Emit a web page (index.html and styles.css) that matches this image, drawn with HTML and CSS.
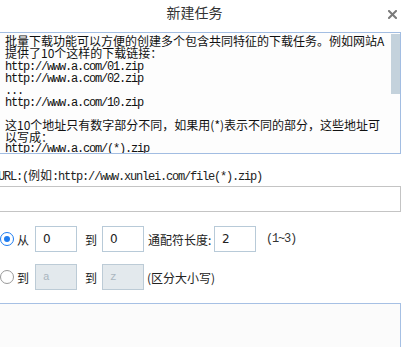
FILE: index.html
```html
<!DOCTYPE html>
<html lang="zh-CN">
<head>
    <meta charset="UTF-8">
    <title>新建任务</title>
    <link rel="stylesheet" href="styles.css">
</head>
<body>
    <div class="dialog">
        <!-- Заголовок окна -->
        <div class="header">
            <span class="title">新建任务</span>
            <span class="close">
                <svg width="9" height="9" viewBox="0 0 9 9">
                    <path d="M1 1 L8 8 M8 1 L1 8" stroke="#7a7a7a" stroke-width="2" stroke-linecap="square"/>
                </svg>
            </span>
        </div>

        <div class="body">
            <!-- Описание пакетной загрузки -->
            <div class="memo">
                <div class="memo-text">
                    <div class="line">批量下载功能可以方便的创建多个包含共同特征的下载任务。例如网站A</div>
                    <div class="line">提供了10个这样的下载链接：</div>
                    <div class="line mono first-url">http://www.a.com/01.zip</div>
                    <div class="line mono">http://www.a.com/02.zip</div>
                    <div class="line mono">...</div>
                    <div class="line mono">http://www.a.com/10.zip</div>
                    <div class="line blank"></div>
                    <div class="line">这10个地址只有数字部分不同，如果用(*)表示不同的部分，这些地址可</div>
                    <div class="line">以写成：</div>
                    <div class="line mono">http://www.a.com/(*).zip</div>
                </div>
                <div class="scrollbar"><div class="thumb"></div></div>
            </div>

            <div class="url-label"><span class="mono">URL:(</span>例如<span class="mono">:http://www.xunlei.com/file(*).zip)</span></div>
            <div class="url-input"></div>

            <!-- Диапазон чисел -->
            <div class="range-row">
                <span class="radio checked"></span>
                <span class="label first">从</span>
                <span class="field">0</span>
                <span class="label">到</span>
                <span class="field to">0</span>
                <span class="label wide">通配符长度:</span>
                <span class="field len">2</span>
                <span class="hint mono">(1~3)</span>
            </div>

            <!-- Диапазон букв -->
            <div class="range-row second">
                <span class="radio"></span>
                <span class="label first">到</span>
                <span class="field disabled mono">a</span>
                <span class="label">到</span>
                <span class="field disabled to mono">z</span>
                <span class="label case">(区分大小写)</span>
            </div>

            <div class="result"></div>
        </div>
    </div>
</body>
</html>
```

FILE: styles.css
```css
/* Основные стили */
body, html {
    margin: 0;
    padding: 0;
    background-color: #fff;
    font-family: 'Noto Sans CJK SC', sans-serif;
    color: #222;
    overflow: hidden;
}

.dialog {
    width: 412px;
    height: 347px;
    overflow: hidden;
}

.header {
    display: flex;
    align-items: flex-start;
    height: 32px;
    padding-left: 12px;
    box-sizing: border-box;
}

.title {
    flex: 1;
    text-align: center;
    font-size: 14px;
    line-height: 24px;
    color: #333;
}

.close {
    width: 35px;
    padding-top: 10px;
    padding-left: 11px;
    box-sizing: border-box;
}

.close svg {
    display: block;
}

.body {
    margin-left: -4px;
    width: 405px;
    display: flex;
    flex-direction: column;
}

.mono {
    font-family: 'Liberation Mono', monospace;
    font-size: 12px;
    letter-spacing: -1.2px;
}

/* Текстовое поле с описанием */
.memo {
    display: flex;
    height: 122px;
    box-sizing: border-box;
    border: 1px solid #a2bde2;
    background-color: #fdfdfd;
    overflow: hidden;
}

.memo-text {
    flex: 1;
    padding: 2px 0 0 8px;
    font-size: 12px;
    color: #111;
    white-space: nowrap;
    overflow: hidden;
}

.line {
    height: 12px;
    line-height: 12px;
}

.line.first-url {
    margin-top: 2px;
}

.line.blank {
    height: 10px;
}

.scrollbar {
    width: 9px;
}

.thumb {
    margin-top: 1px;
    height: 60px;
    background-color: #c4d2dc;
}

.url-label {
    margin-top: 14px;
    padding-left: 2px;
    height: 14px;
    line-height: 14px;
    font-size: 12px;
    color: #222;
    white-space: nowrap;
}

.url-input {
    margin-top: 4px;
    height: 26px;
    box-sizing: border-box;
    border: 1px solid #c4c4c4;
    background-color: #fff;
}

/* Строки с диапазонами */
.range-row {
    display: flex;
    align-items: center;
    margin-top: 14px;
    padding-left: 4px;
    height: 26px;
    font-size: 12px;
}

.range-row.second {
    margin-top: 12px;
}

.radio {
    width: 14px;
    height: 14px;
    box-sizing: border-box;
    border: 1px solid #9a9a9a;
    border-radius: 50%;
    display: flex;
    align-items: center;
    justify-content: center;
    background-color: #fff;
}

.radio.checked {
    border: 1.5px solid #1e7cf0;
}

.radio.checked::after {
    content: '';
    width: 6px;
    height: 6px;
    border-radius: 50%;
    background-color: #1e7cf0;
}

.label {
    margin-left: 8px;
    color: #222;
    white-space: nowrap;
}

.label.first {
    margin-left: 3px;
}

.label.wide {
    margin-left: 4px;
    width: 66px;
}

.label.case {
    margin-left: 3px;
}

.field {
    margin-left: 6px;
    width: 42px;
    height: 26px;
    box-sizing: border-box;
    border: 1px solid #b8cad8;
    background-color: #fff;
    padding-left: 7px;
    line-height: 24px;
    font-family: 'DejaVu Sans', sans-serif;
    font-size: 12px;
    color: #222;
}

.field.to {
    margin-left: 5px;
}

.field.len {
    margin-left: 0;
}

.field.disabled {
    background-color: #e3e9ed;
    border-color: #bccbd6;
    color: #a9b5be;
    font-family: 'Liberation Mono', monospace;
    font-size: 11px;
    letter-spacing: 0;
}

.hint {
    margin-left: 10px;
    color: #333;
}

.result {
    margin-top: 13px;
    height: 44px;
    box-sizing: border-box;
    border: 1px solid #a6c0e4;
    border-bottom: none;
    background-color: #fbfbfb;
}
```
